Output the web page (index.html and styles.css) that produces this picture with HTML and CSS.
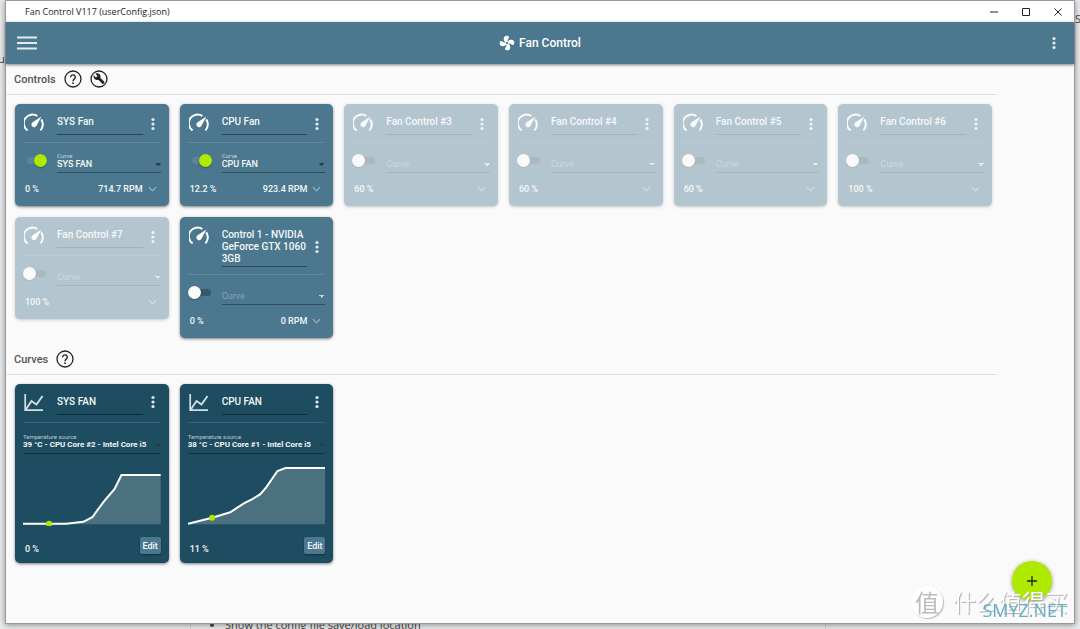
FILE: index.html
```html
<!DOCTYPE html>
<html lang="en">
<head>
<meta charset="utf-8">
<title>Fan Control V117 (userConfig.json)</title>
<link rel="stylesheet" href="styles.css">
</head>
<body>
<svg class="defs" aria-hidden="true">
  <symbol id="gauge" viewBox="0 0 20 20">
    <path d="M3.600 17.400A8.600 8.600 0 0 1 13.400 3M17.200 6.400A8.600 8.600 0 0 1 16.400 17.400" fill="none" stroke="currentColor" stroke-width="2"/>
    <path d="M17.400 3.600L12.600 12.600A2.700 2.700 0 1 1 8.600 9.300Z" fill="currentColor"/>
  </symbol>
  <symbol id="dots" viewBox="0 0 4 14"><circle cx="2" cy="2.500" r="1.600"/><circle cx="2" cy="7" r="1.600"/><circle cx="2" cy="11.500" r="1.600"/></symbol>
  <symbol id="chevron" viewBox="0 0 10 6"><path d="M1 1l4 4 4-4" fill="none" stroke="currentColor" stroke-width="1.200"/></symbol>
  <symbol id="chart" viewBox="0 0 20 20"><path d="M1.200 1v16.200H19" fill="none" stroke="currentColor" stroke-width="1.700"/><path d="M1.800 16.500L7.500 8l5 3.500L18.500 3" fill="none" stroke="currentColor" stroke-width="1.900"/></symbol>
  <symbol id="help" viewBox="0 0 18 18"><circle cx="9" cy="9" r="8" fill="none" stroke="currentColor" stroke-width="1.300"/><path d="M6.700 7.200a2.300 2.300 0 1 1 3.700 1.800C9.500 9.700 9 10 9 11.200" fill="none" stroke="currentColor" stroke-width="1.400"/><circle cx="9" cy="13.200" r=".9" fill="currentColor"/></symbol>
</svg>

<div class="backdrop">
  <span class="backdrop-left">u</span>
  <span class="backdrop-right">S</span>
  <ul class="backdrop-list"><li>Show the config file save/load location</li></ul>
</div>

<div class="window">
  <header class="titlebar">
    <span class="titlebar-text">Fan Control V117 (userConfig.json)</span>
    <div class="window-buttons">
      <button aria-label="Minimize"><svg viewBox="0 0 8 8"><path d="M0 4h8"/></svg></button>
      <button aria-label="Maximize"><svg viewBox="0 0 8 8"><path d="M.5.5h7v7h-7z"/></svg></button>
      <button aria-label="Close"><svg viewBox="0 0 8 8"><path d="M.5.5l7 7M7.500.5l-7 7"/></svg></button>
    </div>
  </header>
  <div class="appbar">
    <button class="menu" aria-label="Menu"><svg viewBox="0 0 20 14"><path d="M0 1.500h20M0 7h20M0 12.500h20"/></svg></button>
    <h1 class="brand"><svg viewBox="0 0 16 16"><g><path id="blade" d="M8 8C5 7 4.300 4.500 5 2.300C5.700.2 9.800.2 10 2C10.100 3.800 8.200 4 8.600 6.500Z"/><use href="#blade" transform="rotate(90 8 8)"/><use href="#blade" transform="rotate(180 8 8)"/><use href="#blade" transform="rotate(270 8 8)"/></g><circle cx="8" cy="8" r="1" class="hub"/></svg>Fan Control</h1>
    <button class="more" aria-label="More"><svg><use href="#dots"/></svg></button>
  </div>

  <main class="content">
    <section>
      <div class="section-head">
        <h2>Controls</h2>
        <button class="round" aria-label="Help with controls"><svg><use href="#help"/></svg></button>
        <button class="round" aria-label="Setup"><svg viewBox="0 0 18 18"><circle cx="9" cy="9" r="8" fill="none" stroke="currentColor" stroke-width="1.300"/><path d="M3.800 5.300l2.100 2.100 1.600-1.500-2.100-2.100c1.600-.8 3.400-.5 4.400.7.800 1 .9 2.100.5 3.200l4 4c.4.400.4.800 0 1.200l-.8.800c-.4.400-.8.400-1.200 0l-4-4c-1.200.5-2.600.3-3.600-.7-1-1-1.400-2.400-.9-3.700z" fill="currentColor"/></svg></button>
      </div>
      <div class="cards">
        <article class="card">
          <div class="card-head"><svg class="kind"><use href="#gauge"/></svg><textarea class="name" rows="1" aria-label="Name">SYS Fan</textarea><button class="more" aria-label="Options"><svg><use href="#dots"/></svg></button></div>
          <div class="curve-row"><input type="checkbox" class="switch" aria-label="Enable SYS Fan" checked><div class="field"><label for="c1">Curve</label><select id="c1"><option>SYS FAN</option></select></div></div>
          <div class="status"><span>0 %</span><span class="rpm">714.7 RPM</span><button class="expand" aria-label="Expand"><svg><use href="#chevron"/></svg></button></div>
        </article>
        <article class="card">
          <div class="card-head"><svg class="kind"><use href="#gauge"/></svg><textarea class="name" rows="1" aria-label="Name">CPU Fan</textarea><button class="more" aria-label="Options"><svg><use href="#dots"/></svg></button></div>
          <div class="curve-row"><input type="checkbox" class="switch" aria-label="Enable CPU Fan" checked><div class="field"><label for="c2">Curve</label><select id="c2"><option>CPU FAN</option></select></div></div>
          <div class="status"><span>12.2 %</span><span class="rpm">923.4 RPM</span><button class="expand" aria-label="Expand"><svg><use href="#chevron"/></svg></button></div>
        </article>
        <article class="card off">
          <div class="card-head"><svg class="kind"><use href="#gauge"/></svg><textarea class="name" rows="1" aria-label="Name">Fan Control #3</textarea><button class="more" aria-label="Options"><svg><use href="#dots"/></svg></button></div>
          <div class="curve-row"><input type="checkbox" class="switch" aria-label="Enable Fan Control #3"><div class="field"><select class="empty" aria-label="Curve"><option>Curve</option></select></div></div>
          <div class="status"><span>60 %</span><button class="expand" aria-label="Expand"><svg><use href="#chevron"/></svg></button></div>
        </article>
        <article class="card off">
          <div class="card-head"><svg class="kind"><use href="#gauge"/></svg><textarea class="name" rows="1" aria-label="Name">Fan Control #4</textarea><button class="more" aria-label="Options"><svg><use href="#dots"/></svg></button></div>
          <div class="curve-row"><input type="checkbox" class="switch" aria-label="Enable Fan Control #4"><div class="field"><select class="empty" aria-label="Curve"><option>Curve</option></select></div></div>
          <div class="status"><span>60 %</span><button class="expand" aria-label="Expand"><svg><use href="#chevron"/></svg></button></div>
        </article>
        <article class="card off">
          <div class="card-head"><svg class="kind"><use href="#gauge"/></svg><textarea class="name" rows="1" aria-label="Name">Fan Control #5</textarea><button class="more" aria-label="Options"><svg><use href="#dots"/></svg></button></div>
          <div class="curve-row"><input type="checkbox" class="switch" aria-label="Enable Fan Control #5"><div class="field"><select class="empty" aria-label="Curve"><option>Curve</option></select></div></div>
          <div class="status"><span>60 %</span><button class="expand" aria-label="Expand"><svg><use href="#chevron"/></svg></button></div>
        </article>
        <article class="card off">
          <div class="card-head"><svg class="kind"><use href="#gauge"/></svg><textarea class="name" rows="1" aria-label="Name">Fan Control #6</textarea><button class="more" aria-label="Options"><svg><use href="#dots"/></svg></button></div>
          <div class="curve-row"><input type="checkbox" class="switch" aria-label="Enable Fan Control #6"><div class="field"><select class="empty" aria-label="Curve"><option>Curve</option></select></div></div>
          <div class="status"><span>100 %</span><button class="expand" aria-label="Expand"><svg><use href="#chevron"/></svg></button></div>
        </article>
        <article class="card off">
          <div class="card-head"><svg class="kind"><use href="#gauge"/></svg><textarea class="name" rows="1" aria-label="Name">Fan Control #7</textarea><button class="more" aria-label="Options"><svg><use href="#dots"/></svg></button></div>
          <div class="curve-row"><input type="checkbox" class="switch" aria-label="Enable Fan Control #7"><div class="field"><select class="empty" aria-label="Curve"><option>Curve</option></select></div></div>
          <div class="status"><span>100 %</span><button class="expand" aria-label="Expand"><svg><use href="#chevron"/></svg></button></div>
        </article>
        <article class="card">
          <div class="card-head"><svg class="kind"><use href="#gauge"/></svg><textarea class="name" rows="3" aria-label="Name">Control 1 - NVIDIA GeForce GTX 1060 3GB</textarea><button class="more" aria-label="Options"><svg><use href="#dots"/></svg></button></div>
          <div class="curve-row"><input type="checkbox" class="switch" aria-label="Enable Control 1"><div class="field"><select class="empty" aria-label="Curve"><option>Curve</option></select></div></div>
          <div class="status"><span>0 %</span><span class="rpm">0 RPM</span><button class="expand" aria-label="Expand"><svg><use href="#chevron"/></svg></button></div>
        </article>
      </div>
    </section>

    <section>
      <div class="section-head">
        <h2>Curves</h2>
        <button class="round" aria-label="Help with curves"><svg><use href="#help"/></svg></button>
      </div>
      <div class="cards">
        <article class="card dark">
          <div class="card-head"><svg class="kind"><use href="#chart"/></svg><textarea class="name" rows="1" aria-label="Name">SYS FAN</textarea><button class="more" aria-label="Options"><svg><use href="#dots"/></svg></button></div>
          <div class="field source"><label for="s1">Temperature source</label><select id="s1"><option>39 °C - CPU Core #2 - Intel Core i5</option></select></div>
          <svg class="graph" viewBox="0 0 137 62"><path class="area" d="M0 59.500H43L60 57.500L69 53L74 46L80 38L85 32L91 25L98 11H137V60H0Z"/><path class="line" d="M0 59.500H43L60 57.500L69 53L74 46L80 38L85 32L91 25L98 11H137"/><circle cx="26" cy="59.500" r="3"/></svg>
          <div class="status"><span>0 %</span><button class="edit">Edit</button></div>
        </article>
        <article class="card dark">
          <div class="card-head"><svg class="kind"><use href="#chart"/></svg><textarea class="name" rows="1" aria-label="Name">CPU FAN</textarea><button class="more" aria-label="Options"><svg><use href="#dots"/></svg></button></div>
          <div class="field source"><label for="s2">Temperature source</label><select id="s2"><option>38 °C - CPU Core #1 - Intel Core i5</option></select></div>
          <svg class="graph" viewBox="0 0 137 62"><path class="area" d="M0 59.500L24 53.500L42 48L56 39L64 35L72 30L78 23L89 7L97 4H137V60H0Z"/><path class="line" d="M0 59.500L24 53.500L42 48L56 39L64 35L72 30L78 23L89 7L97 4H137"/><circle cx="24" cy="53.500" r="3"/></svg>
          <div class="status"><span>11 %</span><button class="edit">Edit</button></div>
        </article>
      </div>
    </section>
  </main>
</div>

<button class="fab" aria-label="Add"><svg viewBox="0 0 10 10"><path d="M5 0v10M0 5h10"/></svg></button>
<div class="watermark"><span class="seal">值</span><span class="mark">什么值得买</span></div>
<div class="site">SMYZ.NET</div>
</body>
</html>
```
FILE: styles.css
```css
* { box-sizing: border-box; }
body {
  margin: 0;
  padding: 0 5px 5px;
  min-height: 100vh;
  display: flex;
  background: #e9eaeb;
  font-family: Roboto, sans-serif;
  font-weight: 500;
}
button {
  display: grid;
  place-items: center;
  border: 0;
  padding: 0;
  background: none;
  color: inherit;
  font: inherit;
}
svg { display: block; }
h1, h2 { margin: 0; font-weight: 500; }
.defs { position: absolute; width: 0; height: 0; }

.backdrop {
  position: absolute;
  inset: 0;
  overflow: hidden;
  color: #444;
  font: 11px "Open Sans", sans-serif;
}
.backdrop-left { position: absolute; left: -2px; top: 51px; }
.backdrop-right { position: absolute; right: -1px; top: 11px; }
.backdrop-list { position: absolute; left: 190px; right: 254px; bottom: -4px; margin: 0; padding-left: 34px; line-height: 16px; border: solid #d5d5d5; border-width: 0 1px; }

.window {
  position: relative;
  flex: 1;
  min-width: 0;
  display: flex;
  flex-direction: column;
  border: 1px solid #999;
  background: #fafafa;
  box-shadow: 0 1px 6px rgba(0, 0, 0, .4);
}
.titlebar {
  display: flex;
  align-items: center;
  justify-content: space-between;
  height: 21px;
  padding: 0 12px 0 19px;
  background: #fff;
  color: #222;
}
.titlebar-text { font: 9px "Open Sans", sans-serif; }
.window-buttons { display: flex; gap: 24px; }
.window-buttons svg { width: 8px; height: 8px; fill: none; stroke: #222; }
.appbar {
  display: grid;
  grid-template-columns: 1fr auto 1fr;
  align-items: center;
  height: 42px;
  padding: 0 11px;
  background: #4b788e;
  box-shadow: 0 1px 3px rgba(0, 0, 0, .5);
  color: #fff;
}
.menu svg { width: 20px; height: 14px; stroke: #e3ebee; stroke-width: 2; }
.menu { justify-self: start; }
.appbar .more { justify-self: end; margin-right: 7px; }
.brand { display: flex; align-items: center; gap: 4px; font-size: 12px; }
.brand svg { width: 16px; height: 16px; fill: #fff; }
.brand .hub { fill: #4b788e; }
.more svg { width: 4px; height: 14px; fill: #e3ebee; }

.content { flex: 1; padding-right: 77px; }
.section-head {
  display: flex;
  align-items: center;
  gap: 8px;
  height: 31px;
  padding-left: 8px;
  border-bottom: 1px solid #e0e0e0;
  color: #555;
}
.section-head h2 { font-size: 11px; }
.round svg { width: 18px; height: 18px; color: #222; }
.cards {
  display: grid;
  grid-template-columns: repeat(6, minmax(0, 1fr));
  align-items: start;
  gap: 11px;
  padding: 9px 5px 6px 9px;
}
.card {
  padding: 9px 8px;
  border-radius: 5px;
  background: #4b788e;
  box-shadow: 0 1px 3px rgba(0, 0, 0, .5);
  color: #f4f7f8;
  font-size: 9px;
}
.card.off { opacity: .4; }
.card.dark { background: #1e4d61; }
.card-head {
  display: flex;
  align-items: center;
  padding-bottom: 7px;
  border-bottom: 1px solid rgba(255, 255, 255, .12);
}
.kind { width: 20px; height: 20px; margin-left: 1px; align-self: flex-start; flex: none; color: #fff; }
.dark .kind { color: #d5dfe3; }
.name {
  flex: 1;
  min-width: 0;
  min-height: 22px;
  margin: 0 8px 0 13px;
  padding: 3px 0 1px;
  border: 0;
  border-bottom: 1px solid rgba(0, 0, 0, .4);
  background: none;
  color: inherit;
  font: 500 10px/12px Roboto, sans-serif;
  resize: none;
  overflow: hidden;
}
.card .more { margin-right: 6px; }
.dark .more { margin-bottom: 5px; }
.curve-row { display: flex; align-items: center; gap: 11px; padding-top: 6px; }
.switch {
  appearance: none;
  position: relative;
  flex: none;
  width: 19px;
  height: 7px;
  margin: 0 0 2px 4px;
  border-radius: 4px;
  background: rgba(0, 0, 0, .26);
}
.switch::before {
  content: "";
  position: absolute;
  left: -4px;
  top: -3px;
  width: 13px;
  height: 13px;
  border-radius: 50%;
  background: #fafafa;
  box-shadow: 0 1px 2px rgba(0, 0, 0, .3);
}
.switch:checked { background: rgba(255, 255, 255, .1); }
.switch:checked::before { left: 7px; background: #aeea00; }
.field {
  flex: 1;
  min-width: 0;
  height: 24px;
  display: flex;
  flex-direction: column;
  justify-content: flex-end;
  border-bottom: 1px solid rgba(0, 0, 0, .35);
}
.field label { font-size: 6px; line-height: 7px; font-weight: 400; color: rgba(255, 255, 255, .7); }
.field select {
  appearance: none;
  width: 100%;
  height: 10px;
  margin-bottom: 3px;
  padding: 0 10px 0 0;
  border: 0;
  background: linear-gradient(45deg, transparent 50%, #203f4c 50%) right 3px center / 3px 3px no-repeat, linear-gradient(-45deg, transparent 50%, #203f4c 50%) right 0 center / 3px 3px no-repeat;
  color: inherit;
  font: 500 9px/10px Roboto, sans-serif;
}
.field select.empty {
  background-image: linear-gradient(45deg, transparent 50%, #c9d6dc 50%), linear-gradient(-45deg, transparent 50%, #c9d6dc 50%);
  color: rgba(255, 255, 255, .35);
  font-weight: 400;
}
.source select { font-size: 8px; font-weight: 700; }
.status { display: flex; align-items: center; min-height: 17px; margin-top: 7px; padding-left: 2px; }
.rpm { margin-left: auto; }
.expand { margin: 0 4px 0 auto; }
.rpm + .expand { margin-left: 5px; }
.expand svg { width: 9px; height: 6px; color: rgba(255, 255, 255, .5); }
.field.source { flex: none; margin-top: 7px; }
.graph { width: 100%; margin-top: 10px; }
.area { fill: rgba(255, 255, 255, .2); }
.line { fill: none; stroke: #fff; stroke-width: 2; }
.graph circle { fill: #aeea00; }
.dark .status { margin-top: 11px; align-items: flex-end; }
.edit {
  width: 21px;
  height: 17px;
  margin-left: auto;
  border-radius: 2px;
  background: #4b788e;
  box-shadow: 0 1px 2px rgba(0, 0, 0, .4);
  font-size: 9px;
}

.fab {
  position: fixed;
  right: 28px;
  bottom: 28px;
  width: 40px;
  height: 40px;
  border-radius: 50%;
  background: #aeea00;
  box-shadow: 0 1px 4px rgba(0, 0, 0, .4);
}
.fab svg { width: 10px; height: 10px; stroke: #222; stroke-width: 1.3; }
.watermark {
  position: fixed;
  right: 12px;
  bottom: 11px;
  display: flex;
  align-items: center;
  gap: 10px;
  pointer-events: none;
  color: #fff;
  font: 23px/33px "Noto Sans CJK SC", sans-serif;
  text-shadow: 1px 1px 1px #aaa;
}
.seal {
  width: 32px;
  height: 32px;
  border-radius: 50%;
  background: #fff;
  box-shadow: 1px 1px 1px #bbb;
  color: #bbb;
  font-size: 24px;
  line-height: 31px;
  text-align: center;
  text-shadow: none;
}
.site {
  position: fixed;
  right: 13px;
  bottom: 7px;
  pointer-events: none;
  color: #63afc5;
  font: 18px/24px "Open Sans", sans-serif;
}
```
